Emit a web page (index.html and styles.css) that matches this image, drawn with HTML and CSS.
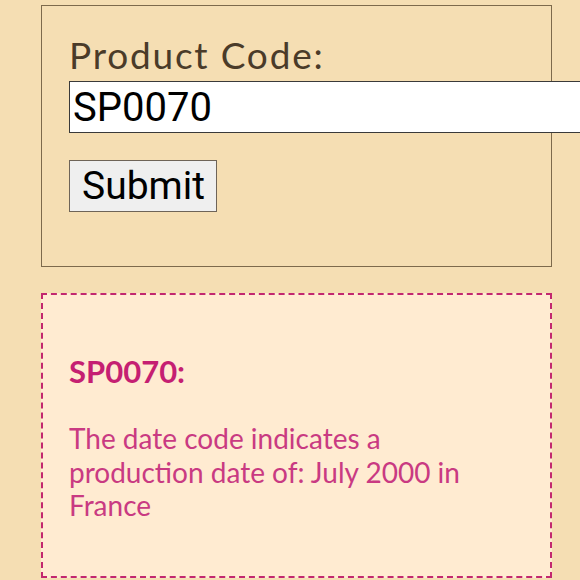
FILE: index.html
```html
<!DOCTYPE html>
<html lang="en">
<head>
<meta charset="utf-8">
<title>Product Code</title>
<link rel="stylesheet" href="styles.css">
</head>
<body>
<main class="page">
  <form class="code-form">
    <label class="code-label" for="code">Product Code:</label>
    <input class="code-input" id="code" type="text" value="SP0070">
    <button class="submit-btn" type="button">Submit</button>
  </form>
  <section class="result">
    <h3 class="result-title">SP0070:</h3>
    <p class="result-text">The date code indicates a production date of: July 2000 in France</p>
  </section>
</main>
</body>
</html>
```
FILE: styles.css
```css
html, body {
  margin: 0;
  padding: 0;
  background: #f5deb3;
  overflow: hidden;
}
body {
  font-family: Lato, "Noto Sans", sans-serif;
}
.page {
  display: flex;
  flex-direction: column;
  gap: 26px;
  padding: 5px 0 0 41px;
  width: 511px;
}
.code-form {
  display: flex;
  flex-direction: column;
  align-items: flex-start;
  border: 1px solid #7d6a4c;
  padding: 27px 0 54px 27px;
  margin: 0;
}
.code-label {
  display: block;
  font-size: 37px;
  line-height: 44px;
  letter-spacing: 1.8px;
  color: #4a3b29;
  margin-bottom: 4px;
}
.code-input {
  box-sizing: border-box;
  width: 530px;
  height: 52px;
  margin: 0 0 27px;
  padding: 0 3px;
  border: 1px solid #3a3a3a;
  background: #ffffff;
  color: #000;
  font-family: Roboto, "Liberation Sans", sans-serif;
  font-size: 40px;
  outline: none;
}
.submit-btn {
  box-sizing: border-box;
  height: 52px;
  margin: 0;
  padding: 0 11px 0 12px;
  border: 1px solid #6e6458;
  background: #efefef;
  color: #000;
  font-family: Roboto, "Liberation Sans", sans-serif;
  font-size: 39px;
  line-height: 1;
}
.result {
  border: 2px dashed #c2276f;
  background: #ffebd1;
  padding: 58px 70px 53px 26px;
  color: #c93a82;
}
.result-title {
  margin: 0 0 33px;
  font-size: 31px;
  line-height: 36px;
  font-weight: 700;
  color: #c51f72;
}
.result-text {
  margin: 0;
  font-size: 28px;
  line-height: 33.5px;
}
```
